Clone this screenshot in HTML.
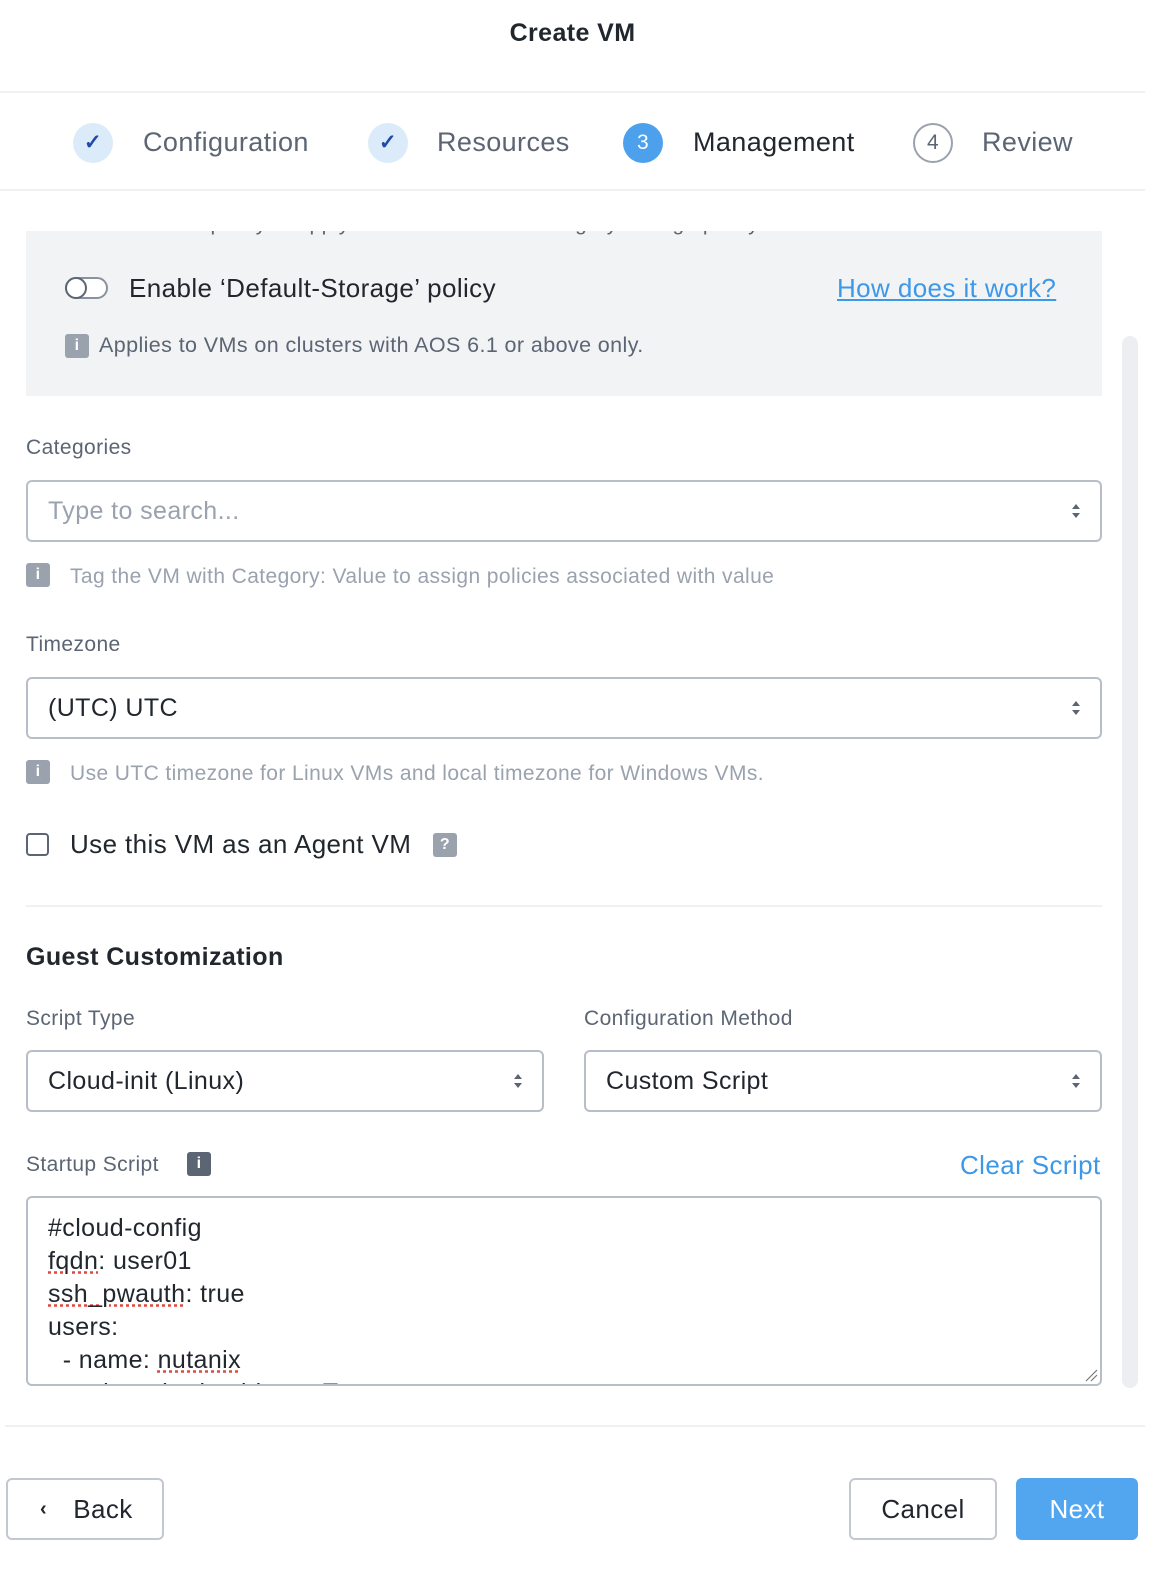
<!DOCTYPE html>
<html><head><style>
*{box-sizing:border-box;margin:0;padding:0}
body{width:1158px;height:1588px;background:#fff;font-family:"Liberation Sans",sans-serif;position:relative;overflow:hidden;color:#22272e;letter-spacing:0.4px}
.a{position:absolute;white-space:nowrap}
.hr{position:absolute;height:2px;background:#f0f1f3}
.circ{position:absolute;width:40px;height:40px;border-radius:50%;text-align:center;line-height:40px;font-size:21px}
.chk{background:#dcebf9;color:#1f4aa8;font-weight:bold}
.sel{position:absolute;border:2px solid #b8bec8;border-radius:6px;height:62px;font-size:25px;line-height:58px;padding-left:20px;color:#22272e}
.arr{position:absolute;right:18px;top:20px;width:12px;height:18px}
.lbl{font-size:21px;color:#5b6573}
.hint{font-size:21px;color:#9aa2ae}
.ico{position:absolute;width:24px;height:24px;border-radius:3px;background:#9aa2ae;color:#fff;font-size:16px;font-weight:bold;text-align:center;line-height:24px}
.btn{position:absolute;border:2px solid #c3c8d0;border-radius:6px;height:62px;font-size:26px;line-height:58px;text-align:center}
</style></head><body>
<div class="a" style="left:0;width:1145px;top:19px;text-align:center;font-size:25px;font-weight:bold;color:#22272e">Create VM</div>
<div class="hr" style="left:0;width:1145px;top:91px"></div>
<div class="circ chk" style="left:73px;top:123px">✓</div>
<div class="a" style="left:143px;top:127px;font-size:27px;color:#5b6573">Configuration</div>
<div class="circ chk" style="left:368px;top:123px">✓</div>
<div class="a" style="left:437px;top:127px;font-size:27px;color:#5b6573">Resources</div>
<div class="circ" style="left:623px;top:123px;background:#4da1ec;color:#fff">3</div>
<div class="a" style="left:693px;top:127px;font-size:27px;color:#22272e">Management</div>
<div class="circ" style="left:913px;top:123px;border:2px solid #9aa2ae;color:#5b6573;line-height:36px">4</div>
<div class="a" style="left:982px;top:127px;font-size:27px;color:#5b6573">Review</div>
<div class="hr" style="left:0;width:1145px;top:189px"></div>

<div style="position:absolute;left:26px;top:231px;width:1076px;height:165px;background:#f2f3f5;overflow:hidden"><div class="a" style="left:70px;top:-19px;font-size:21px;color:#5b6573">Enable this policy to apply to all VMs with no category storage policy</div></div>
<div style="position:absolute;left:65px;top:277px;width:43px;height:22px;border:2px solid #8a929e;border-radius:11px;background:#fff"><div style="position:absolute;left:-2px;top:-2px;width:22px;height:22px;border-radius:50%;border:2px solid #5b6573;background:#fff"></div></div>
<div class="a" style="left:129px;top:273px;font-size:26px">Enable ‘Default-Storage’ policy</div>
<div class="a" style="left:837px;top:273px;font-size:26px;color:#3d98e8;text-decoration:underline">How does it work?</div>
<div class="ico" style="left:65px;top:334px">i</div>
<div class="a" style="left:99px;top:333px;font-size:21.5px;color:#5b6573">Applies to VMs on clusters with AOS 6.1 or above only.</div>

<div style="position:absolute;left:1122px;top:336px;width:16px;height:1052px;background:#eceef1;border-radius:8px"></div>

<div class="a lbl" style="left:26px;top:436px">Categories</div>
<div class="sel" style="left:26px;top:480px;width:1076px;color:#9aa2ae">Type to search...<svg class="arr" viewBox="0 0 12 18"><path d="M2 7L6 2L10 7Z M2 11L6 16L10 11Z" fill="#5b6573"/></svg></div>
<div class="ico" style="left:26px;top:563px">i</div>
<div class="a hint" style="left:70px;top:565px">Tag the VM with Category: Value to assign policies associated with value</div>

<div class="a lbl" style="left:26px;top:633px">Timezone</div>
<div class="sel" style="left:26px;top:677px;width:1076px">(UTC) UTC<svg class="arr" viewBox="0 0 12 18"><path d="M2 7L6 2L10 7Z M2 11L6 16L10 11Z" fill="#5b6573"/></svg></div>
<div class="ico" style="left:26px;top:760px">i</div>
<div class="a hint" style="left:70px;top:762px">Use UTC timezone for Linux VMs and local timezone for Windows VMs.</div>

<div style="position:absolute;left:26px;top:833px;width:23px;height:23px;border:2px solid #5b6573;border-radius:4px"></div>
<div class="a" style="left:70px;top:829px;font-size:26px">Use this VM as an Agent VM</div>
<div class="ico" style="left:433px;top:833px">?</div>

<div class="hr" style="left:26px;width:1076px;top:905px"></div>
<div class="a" style="left:26px;top:943px;font-size:25px;font-weight:bold">Guest Customization</div>

<div class="a lbl" style="left:26px;top:1007px">Script Type</div>
<div class="sel" style="left:26px;top:1050px;width:518px">Cloud-init (Linux)<svg class="arr" viewBox="0 0 12 18"><path d="M2 7L6 2L10 7Z M2 11L6 16L10 11Z" fill="#5b6573"/></svg></div>
<div class="a lbl" style="left:584px;top:1007px">Configuration Method</div>
<div class="sel" style="left:584px;top:1050px;width:518px">Custom Script<svg class="arr" viewBox="0 0 12 18"><path d="M2 7L6 2L10 7Z M2 11L6 16L10 11Z" fill="#5b6573"/></svg></div>

<div class="a lbl" style="left:26px;top:1153px">Startup Script</div>
<div class="ico" style="left:187px;top:1152px;background:#5b6573">i</div>
<div class="a" style="left:960px;top:1150px;font-size:26px;color:#3d98e8">Clear Script</div>
<div style="position:absolute;left:26px;top:1196px;width:1076px;height:190px;border:2px solid #b8bec8;border-radius:6px;overflow:hidden;font-size:25px;line-height:33px;padding:14px 0 0 20px">
<div style="white-space:pre">#cloud-config
<span style="text-decoration:underline dotted #e0483e">fqdn</span>: user01
<span style="text-decoration:underline dotted #e0483e">ssh_pwauth</span>: true
users:
  - name: <span style="text-decoration:underline dotted #e0483e">nutanix</span>
    ssh-authorized-keys: T</div>
<svg style="position:absolute;right:2px;bottom:2px" width="14" height="14"><path d="M2 13L13 2M7 13L13 7" stroke="#777" stroke-width="1.2"/></svg>
</div>

<div class="hr" style="left:5px;width:1140px;top:1425px"></div>
<div class="btn" style="left:6px;top:1478px;width:158px"><span style="position:absolute;left:32px;font-size:20px;font-weight:bold">‹</span><span style="margin-left:36px">Back</span></div>
<div class="btn" style="left:849px;top:1478px;width:148px">Cancel</div>
<div class="btn" style="left:1016px;top:1478px;width:122px;background:#52a6f0;border-color:#52a6f0;color:#fff">Next</div>
</body></html>
